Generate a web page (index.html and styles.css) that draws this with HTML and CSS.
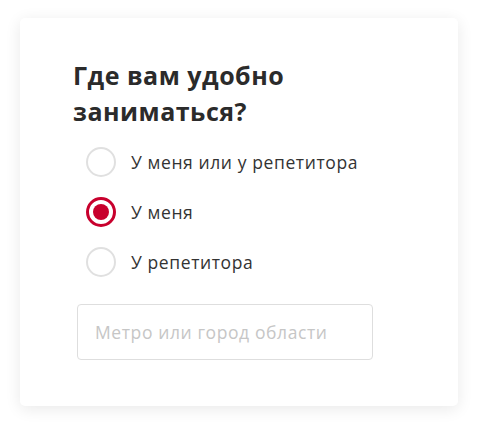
FILE: index.html
```html
<!DOCTYPE html>
<html>
<head>
    <title>Где вам удобно заниматься?</title>
    <link rel="stylesheet" href="styles.css">
</head>
<body>
    <div class="card">
        <h1>Где вам удобно заниматься?</h1>
        <div class="options">
            <label class="option">
                <input type="radio" name="place" value="both">
                <span class="mark"></span>
                <span class="label-text">У меня или у репетитора</span>
            </label>
            <label class="option">
                <input type="radio" name="place" value="mine" checked>
                <span class="mark"></span>
                <span class="label-text">У меня</span>
            </label>
            <label class="option">
                <input type="radio" name="place" value="tutor">
                <span class="mark"></span>
                <span class="label-text">У репетитора</span>
            </label>
        </div>
        <input type="text" class="place-input" placeholder="Метро или город области">
    </div>
</body>
</html>
```

FILE: styles.css
```css
body {
    font-family: "Open Sans", "Liberation Sans", sans-serif;
    margin: 0;
    padding: 18px 20px;
    background-color: #fff;
    color: #333;
}

.card {
    width: 438px;
    height: 388px;
    box-sizing: border-box;
    padding: 39px 40px 0 53px;
    background-color: #fff;
    border-radius: 5px;
    box-shadow: 0 3px 16px rgba(0, 0, 0, 0.09);
}

h1 {
    margin: 0 0 8px;
    font-size: 25px;
    line-height: 36px;
    font-weight: 700;
    letter-spacing: 0.5px;
    color: #2b2b2b;
    width: 240px;
}

.options {
    display: flex;
    flex-direction: column;
    padding-left: 13px;
}

.option {
    display: flex;
    align-items: center;
    gap: 15px;
    height: 50px;
    font-size: 17.5px;
    letter-spacing: 0.6px;
    color: #333;
    cursor: pointer;
}

.option input {
    display: none;
}

.mark {
    width: 30px;
    height: 30px;
    box-sizing: border-box;
    border: 2px solid #e0e0e0;
    border-radius: 50%;
    display: flex;
    align-items: center;
    justify-content: center;
}

.option input:checked + .mark {
    border: 3px solid #c8002d;
}

.option input:checked + .mark::after {
    content: "";
    width: 16px;
    height: 16px;
    border-radius: 50%;
    background-color: #c8002d;
}

.place-input {
    display: block;
    margin: 17px 0 0 4px;
    width: 296px;
    height: 56px;
    box-sizing: border-box;
    padding: 0 17px;
    border: 1px solid #dedede;
    border-radius: 4px;
    font-family: inherit;
    font-size: 17.5px;
    letter-spacing: 0.6px;
    color: #333;
    outline: none;
}

.place-input::placeholder {
    color: #c6c6c6;
}
```
